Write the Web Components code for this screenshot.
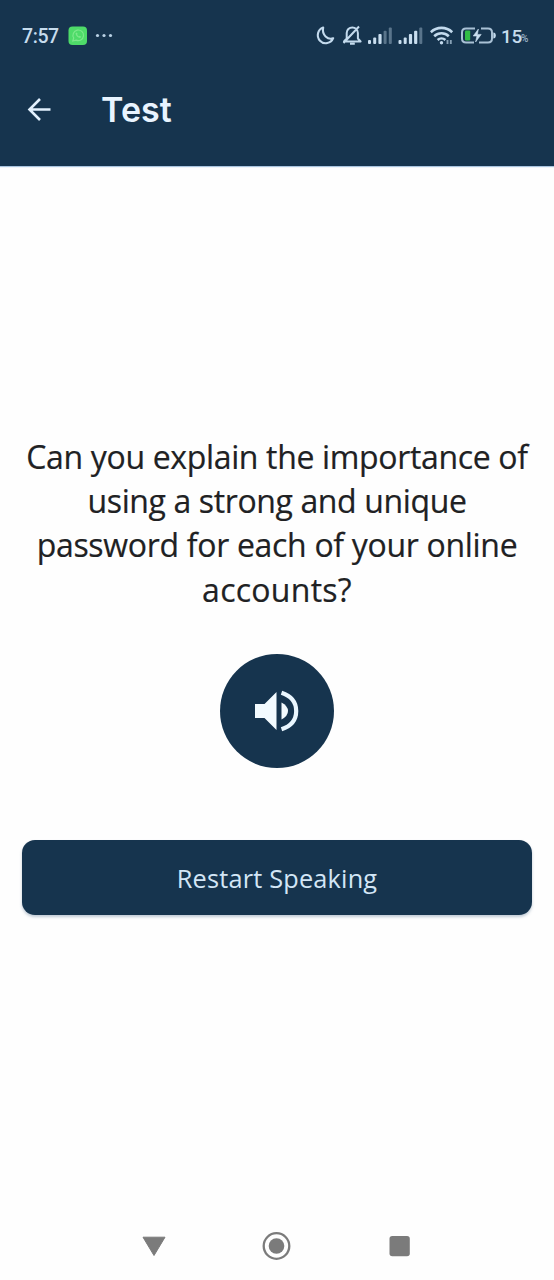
<!DOCTYPE html>
<html lang="en">
<head>
<meta charset="utf-8">
<title>Test</title>
<style>
html, body { margin: 0; height: 100%; background: #fefefe; }
</style>
</head>
<body>
<test-screen></test-screen>

<template id="t-screen">
<style>
:host { display: flex; flex-direction: column; width: 554px; height: 1280px; overflow: hidden; background: #fefefe; }
header { height: 166px; background: #16344e; box-shadow: 0 1px 1px #a9c4de; }
main { flex: 1; display: flex; flex-direction: column; align-items: center; padding: 268.5px 22px 0; }
sound-button { margin-top: 42px; }
action-button { margin-top: 72px; align-self: stretch; }
</style>
<header><status-bar></status-bar><app-bar>Test</app-bar></header>
<main>
<question-text>
<span style="letter-spacing:-.34px">Can you explain the importance of</span>
<span style="letter-spacing:-.38px">using a strong and unique</span>
<span style="letter-spacing:-.31px">password for each of your online</span>
<span style="letter-spacing:.27px">accounts?</span>
</question-text>
<sound-button></sound-button>
<action-button>Restart Speaking</action-button>
</main>
<nav-bar></nav-bar>
</template>

<template id="t-status">
<style>
:host { display: flex; align-items: center; height: 72px; padding: 0 24px 0 22px; box-sizing: border-box; color: #c6dced; font: 500 19.5px/24px Roboto, sans-serif; }
.left, .right { display: flex; align-items: center; }
.right { margin-left: auto; }
svg { display: block; flex: none; }
.time { width: 46px; letter-spacing: -.4px; padding-top: 1px; }
.pct { width: 20px; margin-left: 5px; font-size: 19px; letter-spacing: -.2px; padding-top: 1px; }
.sign { width: 9px; font-size: 10px; padding-top: 5px; opacity: .75; }
</style>
<div class="left">
<span class="time">7:57</span>
<svg width="20" height="20" viewBox="0 0 20 20"><rect x=".5" y=".5" width="18.5" height="18.5" rx="4" fill="#4edb69"/><path d="M4.8 15l.9-3A5.3 5.3 0 1 1 8 14.1z" fill="none" stroke="#7ce88b" stroke-width="1.2"/><path d="M7.5 7.2c.2 2.5 2.3 4.4 4.7 4.8l1-1.2-1.5-1-.8.7-1.8-1.8.6-.8-.9-1.4z" fill="#7ce88b"/></svg>
<svg width="26" height="20" viewBox="0 0 26 20" fill="#b9d1e5"><circle cx="9.5" cy="9.5" r="1.6"/><circle cx="16" cy="9.5" r="1.6"/><circle cx="22.5" cy="9.5" r="1.6"/></svg>
</div>
<div class="right">
<svg width="27" height="22" viewBox="0 0 27 22"><path d="M8.2 2.6A8 8 0 1 0 18.2 13.2Q14.2 14.8 10.6 11.4T8.2 2.6z" fill="none" stroke="#c3daed" stroke-width="2.1" stroke-linejoin="round"/></svg>
<svg width="26" height="22" viewBox="0 0 26 22" fill="none" stroke="#c3daed" stroke-width="2" stroke-linejoin="round"><path d="M2 16.5l2.7-3V8a5.6 5.6 0 0 1 11.2 0v5.5l2.7 3z M8 18.7h4.8 M1.5 18L17 1.5"/></svg>
<svg width="30" height="22" viewBox="0 0 30 22" fill="#c9deef"><rect y="15" width="3" height="4" rx="1"/><rect x="5.2" y="12.5" width="3" height="6.5" rx="1"/><rect x="10.4" y="9" width="3.2" height="10" rx="1"/><g opacity=".38"><rect x="15.6" y="5.8" width="3" height="13.2" rx="1"/><rect x="20.8" y="2.5" width="3" height="16.5" rx="1"/></g></svg>
<svg width="32" height="22" viewBox="0 0 32 22" fill="#c9deef"><rect x=".5" y="15" width="3" height="4" rx="1"/><rect x="5.7" y="12.5" width="3" height="6.5" rx="1"/><rect x="10.9" y="9" width="3.2" height="10" rx="1"/><rect x="16.1" y="5.8" width="3.2" height="13.2" rx="1"/><rect x="21.3" y="2.5" width="3" height="16.5" rx="1" opacity=".38"/></svg>
<svg width="31" height="22" viewBox="0 0 31 22" fill="none" stroke="#c3daed" stroke-width="2.6"><path d="M.8 7.2a15.5 15.5 0 0 1 21.4 0M4.2 11.2a10.7 10.7 0 0 1 14.6 0M7.6 15a5.8 5.8 0 0 1 7.8 0"/><circle cx="11.5" cy="17.7" r="1.7" fill="#c3daed" stroke="none"/><path d="M17.5 15v4M20.8 15v4" stroke-width="1.9" opacity=".65"/></svg>
<svg width="35" height="22" viewBox="0 0 35 22"><path d="M14 3.4H5Q1 3.4 1 7.4v6.2q0 4 4 4h8M20 3.4h7q4 0 4 4v6.2q0 4-4 4h-9" fill="none" stroke="#a9c1d5" stroke-width="2"/><rect x="4" y="5.5" width="5.2" height="10" rx="1" fill="#31bd45"/><path d="M32.3 7.5q2.5.2 2.5 3t-2.5 3z" fill="#c3daed"/><path d="M17.4 4l-5.2 7h3.7l-1.3 6 5.6-7.6h-3.8z" fill="#c9deef" stroke="#c9deef" stroke-width=".6"/></svg>
<span class="pct">15</span><span class="sign">%</span>
</div>
</template>

<template id="t-appbar">
<style>
:host { display: flex; align-items: center; height: 74px; padding-left: 27px; color: #e9f4ff; font: 600 34px/40px Inter, sans-serif; }
svg { display: block; margin-right: 48px; }
span { letter-spacing: .1px; padding-top: 1px; }
</style>
<svg width="26" height="26" viewBox="0 0 26 26" fill="none" stroke="#e2f0fd" stroke-width="2.6"><path d="M23.5 13.5H3M13 3L2.5 13.5 13 24"/></svg>
<span><slot></slot></span>
</template>

<template id="t-question">
<style>
:host { display: flex; flex-direction: column; align-items: center; color: #202123; font: 400 32px/44.4px "Open Sans", sans-serif; white-space: nowrap; -webkit-text-stroke: .2px #202123; }
</style>
<slot></slot>
</template>

<template id="t-sound">
<style>
:host { display: block; width: 114px; height: 114px; }
button { all: unset; display: grid; place-items: center; width: 100%; height: 100%; border-radius: 50%; background: #16344e; }
svg { display: block; }
</style>
<button aria-label="Play question"><svg width="44" height="44" viewBox="0 0 44 44"><path d="M0 15h9.5L21.5 3v38L9.5 29H0z" fill="#f3fbff"/><path d="M26.5 13.5Q33 17 33 22t-6.5 8.5z" fill="#f3fbff"/><path d="M26.5 3.7Q41.2 8.5 41.2 22T26.5 40.3" fill="none" stroke="#eaf7ff" stroke-width="4.2"/></svg></button>
</template>

<template id="t-action">
<style>
:host { display: block; }
button { all: unset; display: flex; align-items: center; justify-content: center; width: 100%; height: 75px; border-radius: 13px; background: #16344e; color: #d3e6f6; font: 400 25.3px/34px "Open Sans", sans-serif; letter-spacing: .2px; box-shadow: 0 2px 3px #7890a877; }
</style>
<button><slot></slot></button>
</template>

<template id="t-nav">
<style>
:host { display: flex; justify-content: center; align-items: center; height: 68px; gap: 93px; }
svg { display: block; }
</style>
<svg width="30" height="30" viewBox="0 0 30 30"><path d="M4 6.2h22L15 24.5z" fill="#7b7b7b" stroke="#7b7b7b" stroke-linejoin="round"/></svg>
<svg width="30" height="30" viewBox="0 0 30 30"><circle cx="14.5" cy="15" r="12.8" fill="none" stroke="#7b7b7b" stroke-width="2.3"/><circle cx="14.5" cy="15" r="7.8" fill="#7b7b7b"/></svg>
<svg width="30" height="30" viewBox="0 0 30 30"><rect x="4.5" y="5" width="20.3" height="20.3" rx="2.8" fill="#7b7b7b"/></svg>
</template>

<script>
class TemplateElement extends HTMLElement {
  constructor() {
    super();
    this.attachShadow({ mode: "open" }).append(
      document.getElementById(this.constructor.template).content.cloneNode(true)
    );
  }
}
const register = (name, template) =>
  customElements.define(name, class extends TemplateElement { static template = template; });
register("status-bar", "t-status");
register("app-bar", "t-appbar");
register("question-text", "t-question");
register("sound-button", "t-sound");
register("action-button", "t-action");
register("nav-bar", "t-nav");
register("test-screen", "t-screen");
</script>
</body>
</html>
